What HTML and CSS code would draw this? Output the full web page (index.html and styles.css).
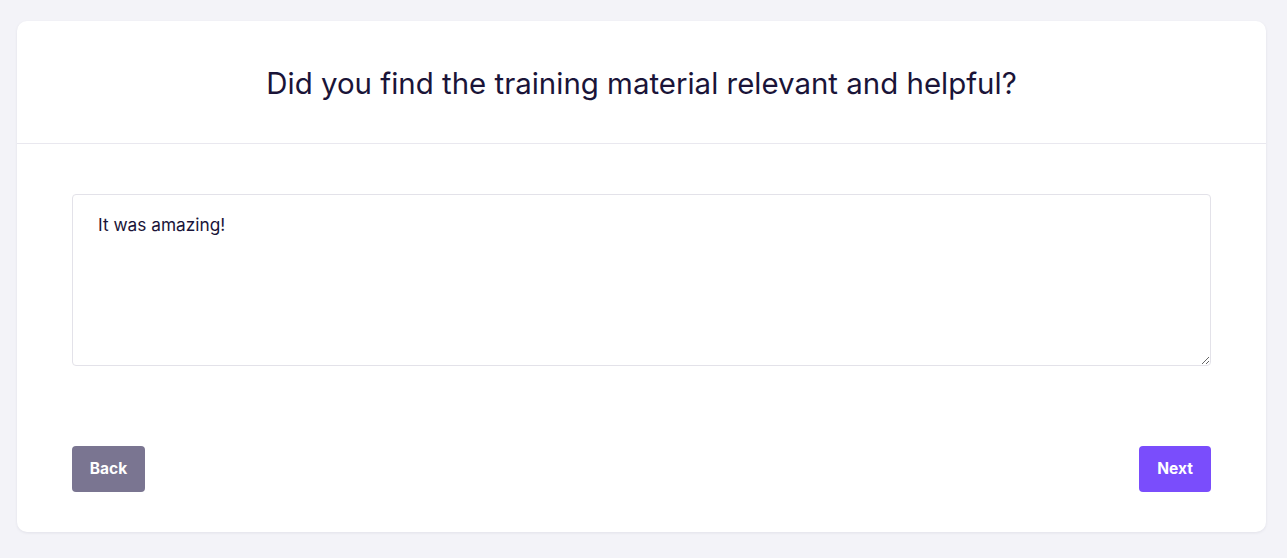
FILE: index.html
```html
<!DOCTYPE html>
<html>
<head>
<meta charset="utf-8">
<link rel="stylesheet" href="styles.css">
</head>
<body>
<div class="card">
  <div class="card-header">
    <h1 class="title">Did you find the training material relevant and helpful?</h1>
  </div>
  <div class="card-body">
    <textarea class="answer">It was amazing!</textarea>
    <div class="actions">
      <button class="btn btn-back">Back</button>
      <button class="btn btn-next">Next</button>
    </div>
  </div>
</div>
</body>
</html>
```
FILE: styles.css
```css
* { box-sizing: border-box; }
html, body { margin: 0; padding: 0; }
body {
  background: #f3f3f8;
  font-family: Inter, "Noto Sans", sans-serif;
  padding: 21px 21px 26px 17px;
}
.card {
  background: #fff;
  border-radius: 10px;
  box-shadow: 0 1px 3px rgba(30, 20, 70, 0.08);
  height: 511px;
  display: flex;
  flex-direction: column;
}
.card-header {
  height: 123px;
  border-bottom: 1px solid #e9e8ef;
  display: flex;
  align-items: center;
  justify-content: center;
  padding-top: 1px;
}
.title {
  margin: 0;
  font-size: 29.45px;
  font-weight: 400;
  color: #1a1438;
}
.card-body {
  padding: 50px 55px 40px 55px;
  display: flex;
  flex-direction: column;
  flex: 1;
}
.answer {
  display: block;
  width: 100%;
  height: 172px;
  border: 1px solid #e3e2e9;
  border-radius: 4px;
  padding: 18px 25px;
  font-family: Inter, "Noto Sans", sans-serif;
  font-size: 17.3px;
  line-height: 24px;
  color: #1a1438;
  resize: vertical;
  outline: none;
}
.actions {
  margin-top: auto;
  display: flex;
  justify-content: space-between;
}
.btn {
  border: none;
  border-radius: 4px;
  height: 46px;
  color: #fff;
  font-family: Inter, "Noto Sans", sans-serif;
  font-weight: 700;
  font-size: 15.5px;
  padding: 0 0 2px;
}
.btn-back { background: #7a7591; width: 73px; }
.btn-next { background: #7a4dfc; width: 72px; }
```
